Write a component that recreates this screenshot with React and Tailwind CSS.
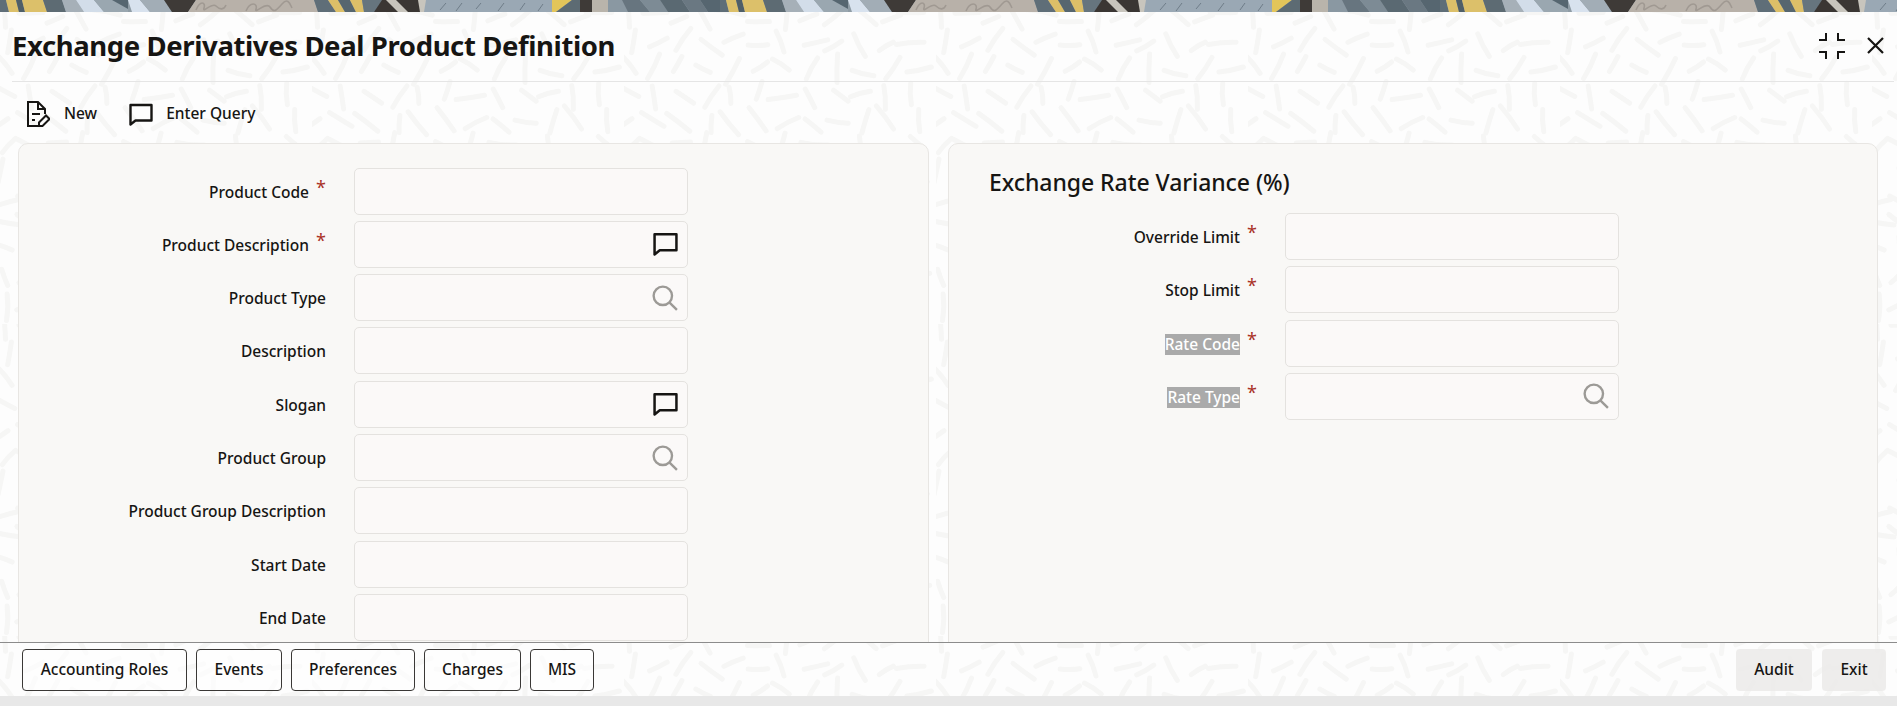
import React from "react";

const F = "font-['Noto_Sans',sans-serif]";
const labelBase = "text-[15.5px] font-medium leading-[21px]";

function Chat({ className }) {
  return (
    <svg viewBox="0 0 24 24" className={className} fill="none" stroke="#161513" strokeWidth="2.4" strokeLinejoin="round">
      <path d="M1.5 3h21v15.5H6.5L1.5 22.5z" />
    </svg>
  );
}

function Search() {
  return (
    <svg viewBox="0 0 24 24" className="w-[26px] h-[26px]" fill="none" stroke="#9c9a96" strokeWidth="2.2">
      <circle cx="10" cy="10" r="8.5" />
      <path d="M16 16 23 23" />
    </svg>
  );
}

function Field({ icon }) {
  return (
    <div className="w-[334px] h-[47px] border border-[#e4e2df] rounded-[5px] bg-[#fbf9f8] flex items-center justify-end pr-[9px]">
      {icon === "chat" && <Chat className="w-[25px] h-[25px] -mt-[2px]" />}
      {icon === "search" && <Search />}
    </div>
  );
}

function FormRow({ label, req, icon, light, labelW }) {
  return (
    <div className="flex items-center gap-[28px]">
      <div className={`${labelW} flex justify-end items-center pt-[2px]`}>
        <span className={light ? `bg-[#aaaaaa] text-white ${labelBase}` : `text-[#161513] ${labelBase}`}>{label}</span>
        <span className={`${req ? "w-[17px]" : "w-0"} text-[#a93226] text-[18px] leading-[20px] -mt-[11px] text-right`}>{req ? "*" : ""}</span>
      </div>
      <Field icon={icon} />
    </div>
  );
}

function makeStrokes(size) {
  const out = [];
  const step = 26;
  let seed = 7;
  const rnd = () => {
    seed = (seed * 9301 + 49297) % 233280;
    return seed / 233280;
  };
  for (let y = 0; y < size; y += step) {
    for (let x = 0; x < size; x += step) {
      const px = x + rnd() * 10;
      const py = y + rnd() * 10;
      const a =
        Math.sin((px / size) * Math.PI * 4) * 1.6 +
        Math.cos((py / size) * Math.PI * 2) * 1.4 +
        (rnd() - 0.5) * 0.5;
      const l = 8 + rnd() * 7;
      const dx = Math.cos(a) * l;
      const dy = Math.sin(a) * l;
      const bend = (rnd() - 0.5) * 6;
      out.push(
        `M${(px - dx).toFixed(1)} ${(py - dy).toFixed(1)}Q${(px - dy * bend * 0.05).toFixed(1)} ${(py + dx * bend * 0.05).toFixed(1)} ${(px + dx).toFixed(1)} ${(py + dy).toFixed(1)}`
      );
    }
  }
  return out;
}

const strokes = makeStrokes(312);

function BgPattern() {
  return (
    <svg className="absolute inset-0 w-full h-full" aria-hidden="true">
      <defs>
        <pattern id="dash" width="312" height="312" patternUnits="userSpaceOnUse">
          {strokes.map((d, i) => (
            <path key={i} d={d} stroke="#f6f6f5" strokeWidth="5" strokeLinecap="round" fill="none" />
          ))}
        </pattern>
      </defs>
      <rect width="100%" height="100%" fill="#fdfdfd" />
      <rect width="100%" height="100%" fill="url(#dash)" />
    </svg>
  );
}

function Banner() {
  return (
    <svg className="w-full h-[12px] block shrink-0" aria-hidden="true">
      <defs>
        <pattern id="band" width="720" height="12" patternUnits="userSpaceOnUse">
          <rect width="720" height="12" fill="#8f9ca5" />
          <polygon points="0,0 6,0 9,12 0,12" fill="#5f6e78" />
          <polygon points="6,0 16,0 19,12 9,12" fill="#dcc06a" />
          <polygon points="16,0 22,0 25,12 19,12" fill="#4f5f68" />
          <polygon points="22,0 43,0 47,12 25,12" fill="#dcc06a" />
          <polygon points="43,0 62,0 66,12 47,12" fill="#5d6b73" />
          <polygon points="62,0 76,0 84,12 66,12" fill="#a6b0b8" />
          <polygon points="76,0 94,0 104,12 84,12" fill="#d2dde9" />
          <polygon points="94,0 128,0 128,12 104,12" fill="#9aa7b0" />
          <polygon points="112,0 128,0 128,9" fill="#566670" />
          <polygon points="128,0 140,0 150,12 132,12" fill="#d8e2ee" />
          <polygon points="140,0 164,0 172,12 150,12" fill="#a2adb6" />
          <polygon points="164,0 196,0 188,12 172,12" fill="#3e3a37" />
          <polygon points="196,0 314,0 318,12 188,12" fill="#b8b1a9" />
          <path d="M196 10c4-10 10-8 8-2s8-6 12-2 8 4 10-1M246 11c4-10 12-8 10-2s10-8 14-2 6 4 12-3 8 0 10 4" stroke="#a09992" strokeWidth="1.6" fill="none" />
          <polygon points="314,0 328,0 336,12 318,12" fill="#5f6e78" />
          <polygon points="328,0 338,0 345,12 336,12" fill="#dcbf68" />
          <polygon points="338,0 350,0 356,12 345,12" fill="#56666f" />
          <polygon points="350,0 362,0 364,12 356,12" fill="#dcbf68" />
          <polygon points="362,0 392,0 374,12 364,12" fill="#66757e" />
          <polygon points="382,0 426,0 424,12 374,12" fill="#3a3633" />
          <polygon points="386,0 396,0 408,12 398,12" fill="#c8c5bd" />
          <polygon points="418,0 430,0 426,12 420,12" fill="#c8c5bd" />
          <polygon points="426,0 552,0 552,12 424,12" fill="#9aa8b4" />
          <path d="M440 10l6-7M456 11l6-8M476 9l5-6M498 11l6-8M520 10l5-7M538 11l5-7" stroke="#6e7c88" strokeWidth="1" fill="none" />
          <polygon points="552,0 572,0 556,12 552,12" fill="#e3c55a" />
          <polygon points="572,0 580,0 580,12 556,12" fill="#5d6b73" />
          <rect x="580" width="12" height="12" fill="#3e3a37" />
          <rect x="592" width="16" height="12" fill="#b9b4ab" />
          <polygon points="608,0 622,0 628,12 608,12" fill="#8a98a2" />
          <polygon points="622,0 640,0 650,12 628,12" fill="#67757f" />
          <polygon points="640,0 660,0 668,12 650,12" fill="#7d8b95" />
          <polygon points="660,0 682,0 690,12 668,12" fill="#5a6972" />
          <polygon points="682,0 700,0 708,12 690,12" fill="#6a7882" />
          <polygon points="700,0 720,0 720,12 708,12" fill="#566670" />
        </pattern>
      </defs>
      <rect width="100%" height="12" fill="url(#band)" />
    </svg>
  );
}

export default function App() {
  const left = [
    ["Product Code", true, null],
    ["Product Description", true, "chat"],
    ["Product Type", false, "search"],
    ["Description", false, null],
    ["Slogan", false, "chat"],
    ["Product Group", false, "search"],
    ["Product Group Description", false, null],
    ["Start Date", false, null],
    ["End Date", false, null],
  ];
  const right = [
    ["Override Limit", true, null, false],
    ["Stop Limit", true, null, false],
    ["Rate Code", true, null, true],
    ["Rate Type", true, "search", true],
  ];
  return (
    <div className={`${F} relative h-[706px] w-full overflow-hidden flex flex-col bg-white text-[#161513]`}>
      <Banner />
      <div className="relative flex-1 flex flex-col min-h-0">
        <BgPattern />
        <div className="relative flex flex-col flex-1 min-h-0">
          <div className="ml-[12px] mr-[3px] h-[70px] border-b border-[#e5e5e5] flex items-center justify-between shrink-0">
            <h1 className="text-[27.5px] font-bold tracking-[-0.39px] leading-[36px] -mt-[1px]">Exchange Derivatives Deal Product Definition</h1>
            <div className="flex items-center gap-[22px] pr-[10px] -mt-[2px]">
              <svg viewBox="0 0 26 26" className="w-[26px] h-[26px]" fill="none" stroke="#161513" strokeWidth="2">
                <path d="M0 7h7V0M19 0v7h7M0 19h7v7M26 19h-7v7" />
              </svg>
              <svg viewBox="0 0 17 17" className="w-[17px] h-[17px]" fill="none" stroke="#161513" strokeWidth="2.2">
                <path d="M1 1l15 15M16 1 1 16" />
              </svg>
            </div>
          </div>
          <div className="h-[61px] flex items-center pl-[26px] gap-[31px] shrink-0 pt-[2px]">
            <div className="flex items-center gap-[14px]">
              <svg viewBox="0 0 24 28" className="w-[24px] h-[28px]" fill="none" stroke="#161513" strokeWidth="2">
                <path d="M13 26H2V2h10l7 7v5M12 2v7h7" />
                <path d="M6 14h8M6 20h3" />
                <path d="M13 26v-3.5l7-7 3.5 3.5-7 7z" />
              </svg>
              <span className="text-[15.5px] font-medium">New</span>
            </div>
            <div className="flex items-center gap-[13px]">
              <Chat className="w-[24px] h-[24px] ml-[1px]" />
              <span className="text-[15.5px] font-medium">Enter Query</span>
            </div>
          </div>
          <div className="flex gap-[19px] pl-[18px] pr-[19px] flex-1 min-h-0 overflow-hidden">
            <div className="w-[911px] h-[600px] shrink-0 rounded-t-[10px] border border-[#e8e6e3] bg-[#f9f8f6] pt-[23.6px] flex flex-col gap-[6.3px]">
              {left.map(([l, r, i]) => (
                <FormRow key={l} label={l} req={r} icon={i} labelW="w-[307px]" />
              ))}
            </div>
            <div className="flex-1 h-[600px] rounded-t-[10px] border border-[#e8e6e3] bg-[#f9f8f6] pl-[40px] pt-[20px] flex flex-col">
              <h2 className="text-[23px] font-medium tracking-[-0.05px] leading-[36px] mb-[13px]">Exchange Rate Variance (%)</h2>
              <div className="flex flex-col gap-[6.3px]">
                {right.map(([l, r, i, li]) => (
                  <FormRow key={l} label={l} req={r} icon={i} light={li} labelW="w-[268px]" />
                ))}
              </div>
            </div>
          </div>
          <div className="h-[54px] border-t border-[#8c8c8c] flex items-center justify-between pl-[22px] pr-[11px] shrink-0 relative">
            <div className="flex gap-[9px]">
              {[["Accounting Roles","w-[165px]"],["Events","w-[86px]"],["Preferences","w-[124px]"],["Charges","w-[97px]"],["MIS","w-[64px]"]].map(([t,w]) => (
                <button key={t} className={`${w} h-[42px] border border-[#3a3836] rounded-[4px] bg-white/60 text-[15.5px] font-medium pt-[1px]`}>{t}</button>
              ))}
            </div>
            <div className="flex gap-[10px]">
              {[["Audit","w-[76px]"],["Exit","w-[64px]"]].map(([t,w]) => (
                <button key={t} className={`${w} h-[42px] rounded-[4px] bg-[#ecebea]/90 text-[15.5px] font-medium pt-[1px]`}>{t}</button>
              ))}
            </div>
          </div>
        </div>
      </div>
      <div className="h-[10px] bg-[#e8e8e8] shrink-0 relative" />
    </div>
  );
}
